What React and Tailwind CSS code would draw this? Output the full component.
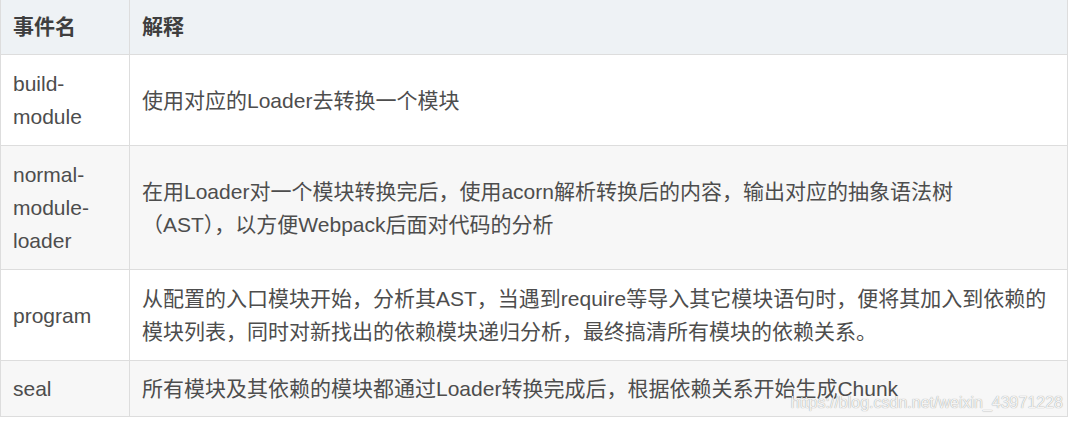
export default function App() {
  const rows = [
    {
      name: ["build-", "module"],
      desc: ["使用对应的Loader去转换一个模块"],
      gray: false,
    },
    {
      name: ["normal-", "module-", "loader"],
      desc: [
        "在用Loader对一个模块转换完后，使用acorn解析转换后的内容，输出对应的抽象语法树",
        "（AST），以方便Webpack后面对代码的分析",
      ],
      gray: true,
    },
    {
      name: ["program"],
      desc: [
        "从配置的入口模块开始，分析其AST，当遇到require等导入其它模块语句时，便将其加入到依赖的",
        "模块列表，同时对新找出的依赖模块递归分析，最终搞清所有模块的依赖关系。",
      ],
      gray: false,
    },
    {
      name: ["seal"],
      desc: ["所有模块及其依赖的模块都通过Loader转换完成后，根据依赖关系开始生成Chunk"],
      gray: true,
      last: true,
    },
  ];

  return (
    <div className="w-[1074px] h-[422px] bg-white font-['Liberation_Sans','Noto_Sans_CJK_SC',sans-serif] text-[21px] text-[#4d4d4d]">
      <div className="relative w-[1068px] border-x border-b border-[#dddddd]">
        {/* 表头 */}
        <div className="flex h-[54px] bg-[#eef2f5] font-bold text-[#3f3f3f]">
          <div className="w-[129px] shrink-0 border-r border-[#dddddd] px-3 flex items-center">
            事件名
          </div>
          <div className="flex-1 px-3 flex items-center">解释</div>
        </div>

        {/* 内容 */}
        {rows.map((row, i) => (
          <div
            key={i}
            className={`flex border-t border-[#dddddd] leading-[33px] ${
              row.gray ? "bg-[#f7f7f7]" : "bg-white"
            } ${row.last ? "h-[56px]" : ""}`}
          >
            <div className="w-[129px] shrink-0 border-r border-[#dddddd] px-3 py-3 flex items-center">
              <div>
                {row.name.map((n, j) => (
                  <div key={j}>{n}</div>
                ))}
              </div>
            </div>
            <div className="flex-1 px-3 py-3 flex items-center">
              <div>
                {row.desc.map((d, j) => (
                  <div key={j} className="whitespace-nowrap">
                    {d}
                  </div>
                ))}
              </div>
            </div>
          </div>
        ))}

        {/* 水印 */}
        <span className="absolute right-[4px] bottom-[5px] text-[16px] leading-none text-[#f4f4f4] [text-shadow:0_0_1px_rgba(0,0,0,0.45)] whitespace-nowrap">
          https://blog.csdn.net/weixin_43971228
        </span>
      </div>
    </div>
  );
}
